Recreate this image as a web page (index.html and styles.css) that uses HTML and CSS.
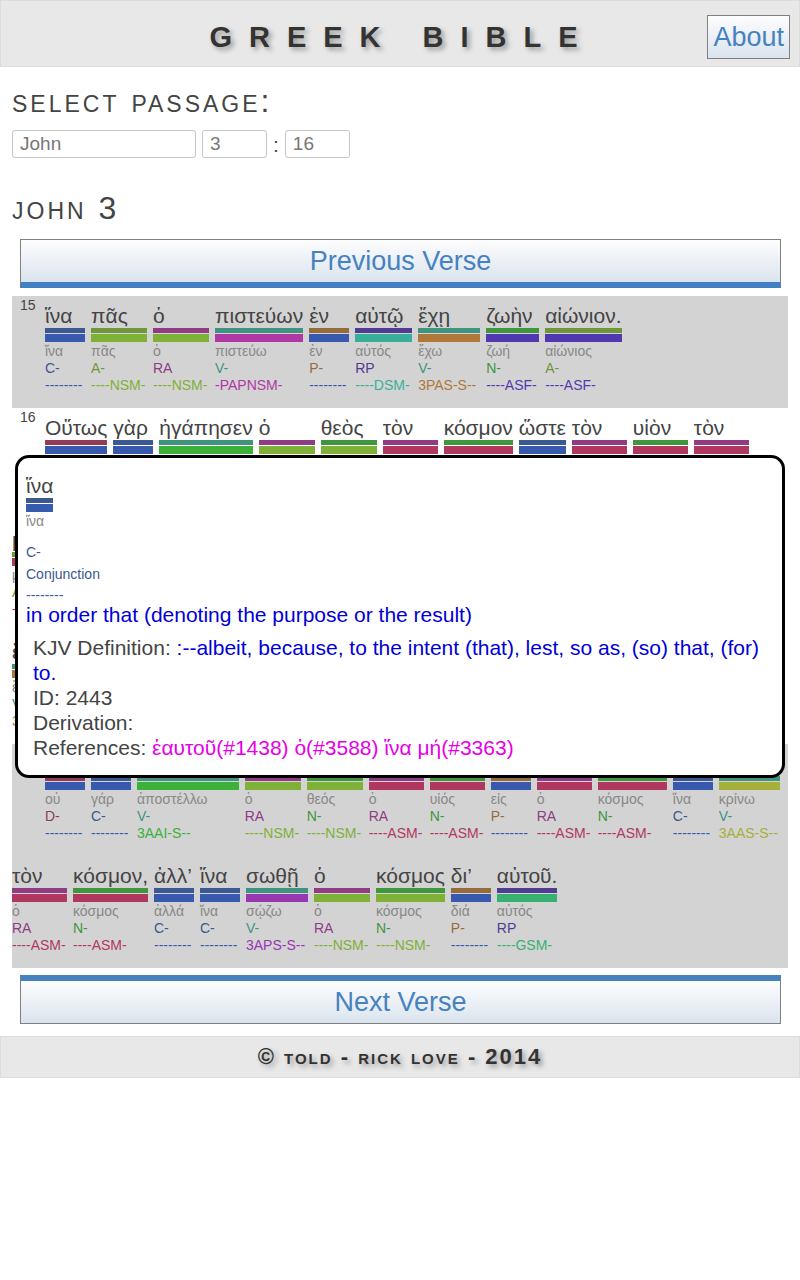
FILE: index.html
```html
<!DOCTYPE html>
<html lang="en">
<head>
<meta charset="utf-8">
<meta name="viewport" content="width=device-width, initial-scale=1">
<title>Greek Bible</title>
<link rel="stylesheet" href="styles.css">
</head>
<body>
<header class="site-header">
  <h1 class="site-title">GREEK BIBLE</h1>
  <button type="button" class="button about">About</button>
</header>
<main class="content">
  <h2 class="heading"><span class="caps">SELECT</span> <span class="caps">PASSAGE</span>:</h2>
  <form class="passage">
    <input class="field field-book" type="text" placeholder="John" aria-label="Book">
    <input class="field field-number" type="text" placeholder="3" aria-label="Chapter">
    <span class="colon">:</span>
    <input class="field field-number" type="text" placeholder="16" aria-label="Verse">
  </form>
  <h2 class="heading chapter"><span class="caps">JOHN</span> 3</h2>
  <button type="button" class="button step previous">Previous Verse</button>
  <div class="reader">
    <section class="verse shaded">
      <span class="number">15</span>
      <span class="word conj none"><span class="form">ἵνα</span><span class="lemma">ἵνα</span><span class="pos">C-</span><span class="parse">--------</span></span>
      <span class="word adj nsm"><span class="form">πᾶς</span><span class="lemma">πᾶς</span><span class="pos">A-</span><span class="parse">----NSM-</span></span>
      <span class="word art nsm"><span class="form">ὁ</span><span class="lemma">ὁ</span><span class="pos">RA</span><span class="parse">----NSM-</span></span>
      <span class="word verb papnsm"><span class="form">πιστεύων</span><span class="lemma">πιστεύω</span><span class="pos">V-</span><span class="parse">-PAPNSM-</span></span>
      <span class="word prep none"><span class="form">ἐν</span><span class="lemma">ἐν</span><span class="pos">P-</span><span class="parse">--------</span></span>
      <span class="word pron dsm"><span class="form">αὐτῷ</span><span class="lemma">αὐτός</span><span class="pos">RP</span><span class="parse">----DSM-</span></span>
      <span class="word verb pas"><span class="form">ἔχῃ</span><span class="lemma">ἔχω</span><span class="pos">V-</span><span class="parse">3PAS-S--</span></span>
      <span class="word noun asf"><span class="form">ζωὴν</span><span class="lemma">ζωή</span><span class="pos">N-</span><span class="parse">----ASF-</span></span>
      <span class="word adj asf"><span class="form">αἰώνιον.</span><span class="lemma">αἰώνιος</span><span class="pos">A-</span><span class="parse">----ASF-</span></span>
    </section>
    <section class="verse">
      <span class="number">16</span>
      <span class="word adv none"><span class="form">Οὕτως</span><span class="lemma">οὕτω</span><span class="pos">D-</span><span class="parse">--------</span></span>
      <span class="word conj none"><span class="form">γὰρ</span><span class="lemma">γάρ</span><span class="pos">C-</span><span class="parse">--------</span></span>
      <span class="word verb aai"><span class="form">ἠγάπησεν</span><span class="lemma">ἀγαπάω</span><span class="pos">V-</span><span class="parse">3AAI-S--</span></span>
      <span class="word art nsm"><span class="form">ὁ</span><span class="lemma">ὁ</span><span class="pos">RA</span><span class="parse">----NSM-</span></span>
      <span class="word noun nsm"><span class="form">θεὸς</span><span class="lemma">θεός</span><span class="pos">N-</span><span class="parse">----NSM-</span></span>
      <span class="word art asm"><span class="form">τὸν</span><span class="lemma">ὁ</span><span class="pos">RA</span><span class="parse">----ASM-</span></span>
      <span class="word noun asm"><span class="form">κόσμον</span><span class="lemma">κόσμος</span><span class="pos">N-</span><span class="parse">----ASM-</span></span>
      <span class="word conj none"><span class="form">ὥστε</span><span class="lemma">ὥστε</span><span class="pos">C-</span><span class="parse">--------</span></span>
      <span class="word art asm"><span class="form">τὸν</span><span class="lemma">ὁ</span><span class="pos">RA</span><span class="parse">----ASM-</span></span>
      <span class="word noun asm"><span class="form">υἱὸν</span><span class="lemma">υἱός</span><span class="pos">N-</span><span class="parse">----ASM-</span></span>
      <span class="word art asm"><span class="form">τὸν</span><span class="lemma">ὁ</span><span class="pos">RA</span><span class="parse">----ASM-</span></span>
      <span class="word adj asm"><span class="form">μονογενῆ</span><span class="lemma">μονογενής</span><span class="pos">A-</span><span class="parse">----ASM-</span></span>
      <span class="word verb aai"><span class="form">ἔδωκεν,</span><span class="lemma">δίδωμι</span><span class="pos">V-</span><span class="parse">3AAI-S--</span></span>
      <span class="word conj none"><span class="form">ἵνα</span><span class="lemma">ἵνα</span><span class="pos">C-</span><span class="parse">--------</span></span>
      <span class="word adj nsm"><span class="form">πᾶς</span><span class="lemma">πᾶς</span><span class="pos">A-</span><span class="parse">----NSM-</span></span>
      <span class="word art nsm"><span class="form">ὁ</span><span class="lemma">ὁ</span><span class="pos">RA</span><span class="parse">----NSM-</span></span>
      <span class="word verb papnsm"><span class="form">πιστεύων</span><span class="lemma">πιστεύω</span><span class="pos">V-</span><span class="parse">-PAPNSM-</span></span>
      <span class="word prep none"><span class="form">εἰς</span><span class="lemma">εἰς</span><span class="pos">P-</span><span class="parse">--------</span></span>
      <span class="word pron asm"><span class="form">αὐτὸν</span><span class="lemma">αὐτός</span><span class="pos">RP</span><span class="parse">----ASM-</span></span>
      <span class="word adv none"><span class="form">μὴ</span><span class="lemma">μή</span><span class="pos">D-</span><span class="parse">--------</span></span>
      <span class="word verb aai"><span class="form">ἀπόληται</span><span class="lemma">ἀπόλλυμι</span><span class="pos">V-</span><span class="parse">3AMS-S--</span></span>
      <span class="word conj none"><span class="form">ἀλλὰ</span><span class="lemma">ἀλλά</span><span class="pos">C-</span><span class="parse">--------</span></span>
      <span class="word verb pas"><span class="form">ἔχῃ</span><span class="lemma">ἔχω</span><span class="pos">V-</span><span class="parse">3PAS-S--</span></span>
      <span class="word noun asf"><span class="form">ζωὴν</span><span class="lemma">ζωή</span><span class="pos">N-</span><span class="parse">----ASF-</span></span>
      <span class="word adj asf"><span class="form">αἰώνιον.</span><span class="lemma">αἰώνιος</span><span class="pos">A-</span><span class="parse">----ASF-</span></span>
    </section>
    <section class="verse shaded">
      <span class="number">17</span>
      <span class="word adv none"><span class="form">οὐ</span><span class="lemma">οὐ</span><span class="pos">D-</span><span class="parse">--------</span></span>
      <span class="word conj none"><span class="form">γὰρ</span><span class="lemma">γάρ</span><span class="pos">C-</span><span class="parse">--------</span></span>
      <span class="word verb aai"><span class="form">ἀπέστειλεν</span><span class="lemma">ἀποστέλλω</span><span class="pos">V-</span><span class="parse">3AAI-S--</span></span>
      <span class="word art nsm"><span class="form">ὁ</span><span class="lemma">ὁ</span><span class="pos">RA</span><span class="parse">----NSM-</span></span>
      <span class="word noun nsm"><span class="form">θεὸς</span><span class="lemma">θεός</span><span class="pos">N-</span><span class="parse">----NSM-</span></span>
      <span class="word art asm"><span class="form">τὸν</span><span class="lemma">ὁ</span><span class="pos">RA</span><span class="parse">----ASM-</span></span>
      <span class="word noun asm"><span class="form">υἱὸν</span><span class="lemma">υἱός</span><span class="pos">N-</span><span class="parse">----ASM-</span></span>
      <span class="word prep none"><span class="form">εἰς</span><span class="lemma">εἰς</span><span class="pos">P-</span><span class="parse">--------</span></span>
      <span class="word art asm"><span class="form">τὸν</span><span class="lemma">ὁ</span><span class="pos">RA</span><span class="parse">----ASM-</span></span>
      <span class="word noun asm"><span class="form">κόσμον</span><span class="lemma">κόσμος</span><span class="pos">N-</span><span class="parse">----ASM-</span></span>
      <span class="word conj none"><span class="form">ἵνα</span><span class="lemma">ἵνα</span><span class="pos">C-</span><span class="parse">--------</span></span>
      <span class="word verb aas"><span class="form">κρίνῃ</span><span class="lemma">κρίνω</span><span class="pos">V-</span><span class="parse">3AAS-S--</span></span>
      <span class="word art asm"><span class="form">τὸν</span><span class="lemma">ὁ</span><span class="pos">RA</span><span class="parse">----ASM-</span></span>
      <span class="word noun asm"><span class="form">κόσμον,</span><span class="lemma">κόσμος</span><span class="pos">N-</span><span class="parse">----ASM-</span></span>
      <span class="word conj none"><span class="form">ἀλλ’</span><span class="lemma">ἀλλά</span><span class="pos">C-</span><span class="parse">--------</span></span>
      <span class="word conj none"><span class="form">ἵνα</span><span class="lemma">ἵνα</span><span class="pos">C-</span><span class="parse">--------</span></span>
      <span class="word verb aps"><span class="form">σωθῇ</span><span class="lemma">σῴζω</span><span class="pos">V-</span><span class="parse">3APS-S--</span></span>
      <span class="word art nsm"><span class="form">ὁ</span><span class="lemma">ὁ</span><span class="pos">RA</span><span class="parse">----NSM-</span></span>
      <span class="word noun nsm"><span class="form">κόσμος</span><span class="lemma">κόσμος</span><span class="pos">N-</span><span class="parse">----NSM-</span></span>
      <span class="word prep none"><span class="form">δι’</span><span class="lemma">διά</span><span class="pos">P-</span><span class="parse">--------</span></span>
      <span class="word pron gsm"><span class="form">αὐτοῦ.</span><span class="lemma">αὐτός</span><span class="pos">RP</span><span class="parse">----GSM-</span></span>
    </section>
    <aside class="popup conj none" aria-label="Word details">
      <div class="popup-word"><span class="form">ἵνα</span><span class="lemma">ἵνα</span></div>
      <div class="popup-grammar"><span>C-</span><span>Conjunction</span></div>
      <div class="popup-parse">--------</div>
      <p class="gloss">in order that (denoting the purpose or the result)</p>
      <div class="details">
        <div>KJV Definition: <span class="kjv">:--albeit, because, to the intent (that), lest, so as, (so) that, (for) to.</span></div>
        <div>ID: 2443</div>
        <div>Derivation:</div>
        <div>References: <a class="ref" href="#1438">ἑαυτοῦ(#1438)</a> <a class="ref" href="#3588">ὁ(#3588)</a> <a class="ref" href="#3363">ἵνα μή(#3363)</a></div>
      </div>
    </aside>
  </div>
  <button type="button" class="button step next">Next Verse</button>
</main>
<footer class="site-footer">© told - rick love - 2014</footer>
</body>
</html>
```
FILE: styles.css
```css
* {
  box-sizing: border-box;
}

body {
  margin: 0;
  background: #fff;
  color: #444;
  font-family: "Liberation Sans", Arial, sans-serif;
  font-size: 21px;
  line-height: 25px;
}

.site-header {
  display: grid;
  grid-template-columns: 1fr auto 1fr;
  align-items: center;
  padding: 14px 9px 7px;
  border: 1px solid #dcdcdc;
  background: #e8e8e8;
}

.site-title {
  grid-column: 2;
  margin: 0;
  padding-left: 4px;
  color: #333;
  font-size: 29px;
  line-height: 44px;
  letter-spacing: 17px;
  text-shadow: 3px 3px 5px #999;
}

.button {
  padding: 0;
  border: 1px solid #808080;
  background: linear-gradient(#fdfdfe, #dae4ee);
  color: #4682c0;
  font-family: inherit;
  font-size: 27px;
  line-height: 42px;
}

.about {
  justify-self: end;
  padding: 0 5px;
}

.content {
  padding: 12px 12px 0;
}

.heading {
  margin: 0;
  font-size: 32px;
  font-weight: normal;
  letter-spacing: 3px;
  line-height: 44px;
}

.caps {
  font-size: 23px;
  line-height: 1;
}

.passage {
  display: flex;
  align-items: center;
  gap: 6px;
  margin-top: 7px;
}

.field {
  height: 28px;
  padding: 0 7px;
  border: 1px solid #c4c4c4;
  border-radius: 3px;
  background: #fff;
  font-family: inherit;
  font-size: 19px;
}

.field::placeholder {
  color: #777;
  opacity: 1;
}

.field-book {
  width: 184px;
}

.field-number {
  width: 65px;
}

.chapter {
  margin-top: 28px;
}

.step {
  display: block;
  width: calc(100% - 15px);
  margin: 0 7px 0 8px;
}

.previous {
  margin-top: 9px;
  border-bottom: 6px solid #4080c2;
}

.next {
  margin-top: 7px;
  border-top: 6px solid #4682c0;
}

.reader {
  position: relative;
  margin-top: 8px;
}

.verse {
  display: flex;
  flex-wrap: wrap;
  column-gap: 6px;
}

.shaded {
  background: #d3d3d3;
}

.number {
  width: 27px;
  padding-left: 8px;
  font-size: 14px;
  line-height: 19px;
}

.word {
  display: flex;
  flex-direction: column;
  padding: 7px 0 14px;
  font-size: 14px;
  line-height: 17px;
}

.form {
  border-bottom: 5px solid var(--pos);
  font-size: 21px;
  line-height: 25px;
}

.lemma {
  margin-top: 1px;
  padding-top: 1px;
  border-top: 8px solid var(--parse);
  color: #888;
}

.pos {
  color: var(--pos);
}

.parse {
  color: var(--parse);
}

.conj { --pos: #3c5890; }
.adj { --pos: #70963c; }
.art { --pos: #903c84; }
.verb { --pos: #3f9480; }
.prep { --pos: #966c3c; }
.pron { --pos: #503c90; }
.noun { --pos: #3f963c; }
.adv { --pos: #903c58; }

.none { --parse: #385aae; min-width: 40px; }
.nsm { --parse: #7fb038; min-width: 56px; }
.asm { --parse: #b0385e; min-width: 55px; }
.dsm { --parse: #38b099; min-width: 57px; }
.gsm { --parse: #38b072; min-width: 57px; }
.asf { --parse: #5238b0; min-width: 53px; }
.papnsm { --parse: #b038a4; min-width: 70px; }
.pas { --parse: #b07838; min-width: 62px; }
.aai { --parse: #3cb038; min-width: 54px; }
.aas { --parse: #a6b038; min-width: 61px; }
.aps { --parse: #9838b0; min-width: 62px; }

.popup {
  position: absolute;
  top: 159px;
  left: 3px;
  right: 3px;
  padding: 15px 8px;
  border: 3px solid #000;
  border-radius: 14px;
  background: #fff;
}

.popup-word {
  display: flex;
  flex-direction: column;
  width: fit-content;
}

.popup-word .lemma,
.popup-grammar,
.popup-parse {
  font-size: 14px;
  line-height: 17px;
}

.popup-grammar {
  display: flex;
  flex-direction: column;
  margin-top: 11px;
  color: var(--pos);
  line-height: 22px;
}

.popup-parse {
  margin-top: 3px;
  color: var(--parse);
  line-height: 14px;
}

.gloss {
  margin: 0;
  color: #0000d8;
}

.details {
  padding: 8px 7px 0;
}

.kjv {
  color: #0000d8;
}

.ref {
  color: #e600e6;
  text-decoration: none;
}

.site-footer {
  margin-top: 12px;
  padding: 8px 0;
  border: 1px solid #dcdcdc;
  background: #e8e8e8;
  color: #333;
  font-size: 22px;
  font-weight: bold;
  font-variant: small-caps;
  letter-spacing: 2px;
  line-height: 24px;
  text-align: center;
  text-shadow: 3px 3px 5px #999;
}
```
